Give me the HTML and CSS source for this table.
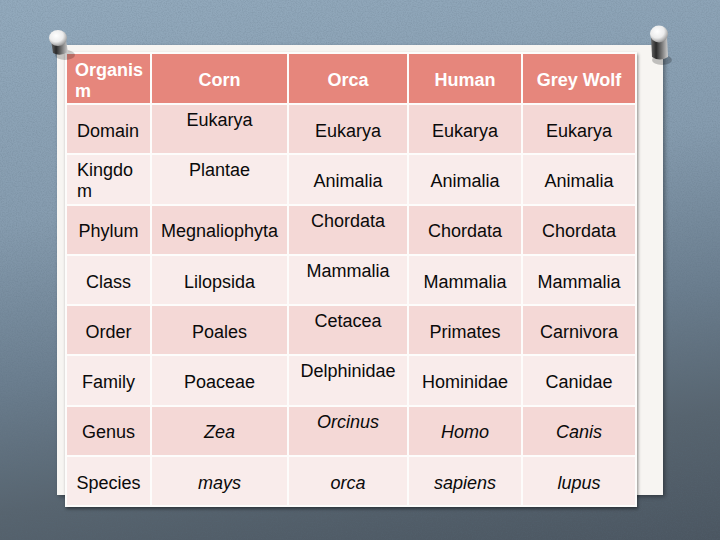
FILE: index.html
```html
<!DOCTYPE html>
<html lang="en">
<head>
<meta charset="utf-8">
<title>Classification</title>
<link rel="stylesheet" href="styles.css">
</head>
<body>
<div class="board">
  <svg class="texture" width="720" height="540" aria-hidden="true">
    <filter id="noise"><feTurbulence type="fractalNoise" baseFrequency="0.8" numOctaves="2" seed="3"/><feColorMatrix type="matrix" values="0 0 0 0 0.1  0 0 0 0 0.15  0 0 0 0 0.2  0 0 0 1.2 -0.45"/></filter>
    <rect width="720" height="540" filter="url(#noise)" opacity="0.35"/>
  </svg>
  <div class="sheet">
    <div class="card">
      <div class="h left">Organism</div>
      <div class="h">Corn</div>
      <div class="h">Orca</div>
      <div class="h">Human</div>
      <div class="h">Grey Wolf</div>

      <div class="c r1 k left2">Domain</div>
      <div class="c r1 top">Eukarya</div>
      <div class="c r1">Eukarya</div>
      <div class="c r1">Eukarya</div>
      <div class="c r1">Eukarya</div>

      <div class="c r2 k left2">Kingdom</div>
      <div class="c r2 top">Plantae</div>
      <div class="c r2">Animalia</div>
      <div class="c r2">Animalia</div>
      <div class="c r2">Animalia</div>

      <div class="c r1 k">Phylum</div>
      <div class="c r1">Megnaliophyta</div>
      <div class="c r1 top">Chordata</div>
      <div class="c r1">Chordata</div>
      <div class="c r1">Chordata</div>

      <div class="c r2 k">Class</div>
      <div class="c r2">Lilopsida</div>
      <div class="c r2 top">Mammalia</div>
      <div class="c r2">Mammalia</div>
      <div class="c r2">Mammalia</div>

      <div class="c r1 k">Order</div>
      <div class="c r1">Poales</div>
      <div class="c r1 top">Cetacea</div>
      <div class="c r1">Primates</div>
      <div class="c r1">Carnivora</div>

      <div class="c r2 k">Family</div>
      <div class="c r2">Poaceae</div>
      <div class="c r2 top">Delphinidae</div>
      <div class="c r2">Hominidae</div>
      <div class="c r2">Canidae</div>

      <div class="c r1 k">Genus</div>
      <div class="c r1 it">Zea</div>
      <div class="c r1 it top">Orcinus</div>
      <div class="c r1 it">Homo</div>
      <div class="c r1 it">Canis</div>

      <div class="c r2 k">Species</div>
      <div class="c r2 it">mays</div>
      <div class="c r2 it">orca</div>
      <div class="c r2 it">sapiens</div>
      <div class="c r2 it">lupus</div>
    </div>
  </div>
  <svg class="pin pin-left" width="34" height="40" viewBox="0 0 34 40" aria-hidden="true">
    <defs>
      <radialGradient id="hg1" cx="0.4" cy="0.35" r="0.7"><stop offset="0" stop-color="#ffffff"/><stop offset="0.55" stop-color="#ececec"/><stop offset="1" stop-color="#8e8e8e"/></radialGradient>
      <linearGradient id="bg1" x1="0" x2="1" y1="0" y2="0"><stop offset="0" stop-color="#6a6a6a"/><stop offset="0.3" stop-color="#2a2a2a"/><stop offset="0.65" stop-color="#7a7a7a"/><stop offset="1" stop-color="#cfcfcf"/></linearGradient>
    </defs>
    <ellipse cx="21" cy="30" rx="10" ry="5" fill="#000" opacity="0.2"/>
    <path d="M7 15 L22 15 L24 27 Q16 32 9 28 Z" fill="url(#bg1)"/>
    <ellipse cx="14" cy="13" rx="9" ry="8" fill="url(#hg1)"/>
  </svg>
  <svg class="pin pin-right" width="34" height="48" viewBox="0 0 34 48" aria-hidden="true">
    <ellipse cx="18" cy="39" rx="10" ry="5" fill="#000" opacity="0.22"/>
    <path d="M7 16 L23 16 L24 36 Q16 41 8 36 Z" fill="url(#bg1)"/>
    <ellipse cx="15" cy="13" rx="9" ry="8.5" fill="url(#hg1)"/>
  </svg>
</div>
</body>
</html>
```

FILE: styles.css
```css
html, body {
  margin: 0;
  padding: 0;
}

body {
  width: 720px;
  height: 540px;
  overflow: hidden;
  font-family: "Liberation Sans", Arial, sans-serif;
}

.board {
  position: relative;
  width: 720px;
  height: 540px;
  box-sizing: border-box;
  padding: 45px 0 0 57px;
  background: linear-gradient(172deg, #93aabd 0%, #869caf 35%, #6b7e8f 60%, #57646f 80%, #4b5661 100%);
}

.texture {
  position: absolute;
  left: 0;
  top: 0;
}

.sheet {
  position: relative;
  width: 606px;
  height: 450px;
  box-sizing: border-box;
  padding: 7px 0 0 8px;
  background: #f7f5f2;
  box-shadow: 2px 2px 4px rgba(0, 0, 0, 0.35);
}

.card {
  width: 572px;
  box-sizing: border-box;
  padding: 2px;
  display: grid;
  grid-template-columns: 83px 135px 118px 112px 112px;
  grid-template-rows: 49px repeat(8, 48.3px);
  gap: 2px;
  background: #fdfcfb;
  box-shadow: 1px 2px 3px rgba(0, 0, 0, 0.45);
}

.h, .c {
  display: flex;
  align-items: center;
  justify-content: center;
  text-align: center;
  font-size: 18px;
  line-height: 21px;
  box-sizing: border-box;
  padding: 4px 4px 0;
}

.h {
  background: #e6867c;
  color: #ffffff;
  font-weight: bold;
}

.c {
  color: #0a0a0a;
}

.r1 {
  background: #f4d8d6;
}

.r2 {
  background: #f9eceb;
}

.k {
  word-break: break-all;
}

.left {
  justify-content: flex-start;
  text-align: left;
  padding: 4px 5px 0 8px;
  word-break: break-all;
}

.left2 {
  justify-content: flex-start;
  text-align: left;
  padding: 4px 5px 0 10px;
}

.top {
  align-items: flex-start;
  padding-top: 5px;
}

.it {
  font-style: italic;
}

.pin {
  position: absolute;
}

.pin-left {
  left: 44px;
  top: 25px;
}

.pin-right {
  left: 644px;
  top: 21px;
}
```
